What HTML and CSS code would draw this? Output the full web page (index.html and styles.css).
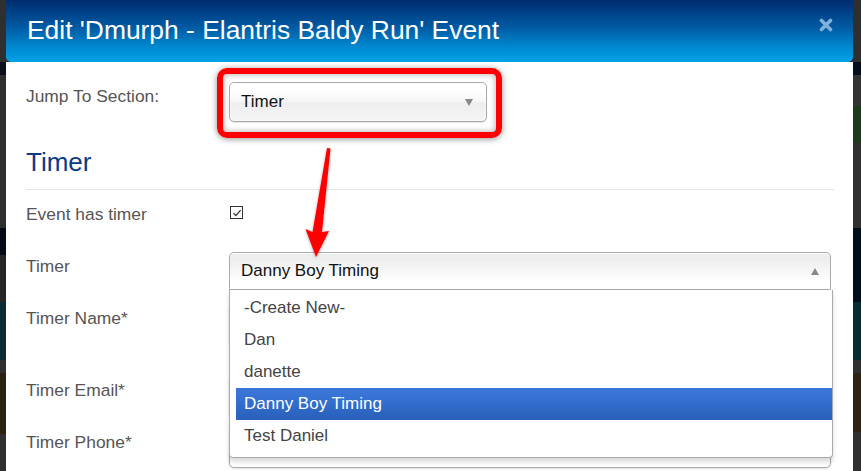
FILE: index.html
```html
<!DOCTYPE html>
<html>
<head>
<meta charset="utf-8">
<link rel="stylesheet" href="styles.css">
</head>
<body>
<div class="strip strip-left"></div>
<div class="modal">
  <div class="modal-header">
    <h1 class="modal-title">Edit 'Dmurph - Elantris Baldy Run' Event</h1>
    <svg class="close" width="14" height="14" viewBox="0 0 14 14"><path d="M2.5 2.5 L11.5 11.5 M11.5 2.5 L2.5 11.5" stroke="#7fb1da" stroke-width="3.6" stroke-linecap="round"/></svg>
  </div>
  <div class="modal-body">
    <div class="row row-jump">
      <label class="label">Jump To Section:</label>
      <div class="field">
        <div class="select select-jump">
          <span class="select-text">Timer</span>
          <span class="caret-down"></span>
        </div>
        <div class="highlight-box"></div>
      </div>
    </div>
    <h2 class="section-title">Timer</h2>
    <div class="divider"></div>
    <div class="row row-check">
      <label class="label">Event has timer</label>
      <div class="field">
        <span class="checkbox"><svg width="10" height="10" viewBox="0 0 10 10"><path d="M1.5 5.2 L4 7.6 L8.6 2.2" fill="none" stroke="#333" stroke-width="1.3"/></svg></span>
      </div>
    </div>
    <div class="row row-timer">
      <label class="label">Timer</label>
      <div class="field">
        <div class="select select-open">
          <span class="select-text">Danny Boy Timing</span>
          <span class="caret-up"></span>
        </div>
        <div class="dropdown">
          <ul class="results">
            <li class="item">-Create New-</li>
            <li class="item">Dan</li>
            <li class="item">danette</li>
            <li class="item item-active">Danny Boy Timing</li>
            <li class="item">Test Daniel</li>
          </ul>
        </div>
      </div>
    </div>
    <div class="row row-input row-name">
      <label class="label">Timer Name*</label>
      <div class="field"><div class="input"></div></div>
    </div>
    <div class="row row-input row-email">
      <label class="label">Timer Email*</label>
      <div class="field"><div class="input"></div></div>
    </div>
    <div class="row row-input row-phone">
      <label class="label">Timer Phone*</label>
      <div class="field"><div class="input"></div></div>
    </div>
  </div>
</div>
<div class="strip strip-right"></div>
<svg class="annotation-arrow" width="861" height="471" viewBox="0 0 861 471">
  <defs>
    <filter id="sh" x="-20%" y="-20%" width="140%" height="140%">
      <feDropShadow dx="0" dy="1" stdDeviation="1.5" flood-color="#000" flood-opacity="0.35"/>
    </filter>
  </defs>
  <polygon filter="url(#sh)" fill="#ff0000" points="327,148 330.5,148.5 322,232 329,231 316,257 305.5,229 312.5,232"/>
</svg>
</body>
</html>
```
FILE: styles.css
```css
* { box-sizing: border-box; }
html, body { margin: 0; padding: 0; }
body {
  width: 861px;
  height: 471px;
  overflow: hidden;
  display: flex;
  background: #2f2f2f;
  font-family: "Liberation Sans", Arial, sans-serif;
  position: relative;
}
.strip { height: 471px; }
.strip-left {
  width: 6px;
  flex: 0 0 6px;
  background: linear-gradient(to bottom,
    #2f2f2f 0, #2f2f2f 62px, #0c0f18 62px, #0c0f18 75px,
    #2f2f2f 75px, #2f2f2f 228px, #050b14 228px, #050b14 255px,
    #262626 255px, #262626 302px, #0a2b36 302px, #0a2b36 360px,
    #2f2f2f 360px, #2f2f2f 373px, #2b2110 373px, #2b2110 434px,
    #2f2f2f 434px);
}
.strip-right {
  flex: 1;
  background: linear-gradient(to bottom,
    #2f2f2f 0, #2f2f2f 62px, #050c1c 62px, #050c1c 75px,
    #333 75px, #333 106px, #1e3a1c 106px, #1e3a1c 143px,
    #303030 143px, #303030 228px, #020d1a 228px, #020d1a 302px,
    #082a33 302px, #082a33 360px, #2f2f2f 360px, #2f2f2f 373px,
    #2e2210 373px, #2e2210 432px, #2f2f2f 432px);
}
.modal {
  width: 847px;
  flex: 0 0 847px;
  display: flex;
  flex-direction: column;
}
.modal-header {
  height: 62px;
  flex: 0 0 62px;
  display: flex;
  justify-content: space-between;
  align-items: flex-start;
  padding: 0 20px 0 21px;
  border-radius: 0 0 5px 5px;
  background: linear-gradient(to bottom, #002c70 0%, #015ca4 45%, #0087ce 75%, #00a3e6 100%);
}
.modal-title {
  margin: 0;
  font-size: 26.4px;
  line-height: 60px;
  font-weight: normal;
  color: #fff;
}
.close { margin-top: 18px; }
.modal-body {
  flex: 1;
  background: #fff;
  padding: 20px 19px 0 20px;
}
.row {
  display: grid;
  grid-template-columns: 203px 602px;
}
.label {
  font-size: 17.4px;
  line-height: 24px;
  color: #555;
  padding-top: 2px;
}
.field { position: relative; }
.row-jump { height: 40px; }
.select {
  height: 40px;
  border: 1px solid #aaa;
  border-radius: 5px;
  background: linear-gradient(to bottom, #fff 20%, #f6f6f6 50%, #eee 52%, #f4f4f4 100%);
  box-shadow: inset 0 0 3px #fff, 0 1px 1px rgba(0,0,0,0.1);
  display: flex;
  align-items: center;
  justify-content: space-between;
  padding: 0 11px 0 11px;
}
.select-jump { width: 258px; }
.select-text { font-size: 17px; color: #111; }
.caret-down {
  width: 0; height: 0;
  border-left: 4.5px solid transparent;
  border-right: 4.5px solid transparent;
  border-top: 7px solid #888;
  margin-right: 2px;
}
.caret-up {
  width: 0; height: 0;
  border-left: 4.5px solid transparent;
  border-right: 4.5px solid transparent;
  border-bottom: 7px solid #888;
  margin-right: 0;
}
.highlight-box {
  position: absolute;
  left: -12px;
  top: -14px;
  width: 285px;
  height: 70px;
  border: 6px solid #ff0000;
  border-radius: 10px;
  box-shadow: 0 1px 6px rgba(0,0,0,0.45), inset 0 0 6px rgba(0,0,0,0.35);
}
.section-title {
  margin: 25px 0 0;
  font-size: 26px;
  line-height: 30px;
  font-weight: normal;
  color: #0b3a87;
}
.divider {
  margin-top: 12px;
  border-top: 1px solid #e5e5e5;
  height: 1px;
}
.row-check { margin-top: 10px; height: 24px; }
.checkbox {
  display: flex;
  align-items: center;
  justify-content: center;
  width: 13px;
  height: 13px;
  margin: 6px 0 0 1px;
  border: 1px solid #333;
  background: #fff;
}
.row-timer { margin-top: 28px; }
.select-open {
  height: 38px;
  border-radius: 5px 5px 0 0;
  background: linear-gradient(to bottom, #eee 20%, #fff 80%);
  box-shadow: inset 0 1px 0 #fff;
}
.dropdown {
  position: absolute;
  z-index: 5;
  left: 0;
  top: 38px;
  width: 604px;
  background: #fff;
  border: 1px solid #aaa;
  border-top: 0;
  border-radius: 0 0 4px 4px;
  box-shadow: 0 4px 5px rgba(0,0,0,0.15);
  padding: 2px 0 5px 6px;
}
.results { list-style: none; margin: 0; padding: 0; }
.item {
  height: 32px;
  line-height: 32px;
  padding-left: 8px;
  font-size: 17px;
  color: #444;
}
.item-active {
  color: #fff;
  background: linear-gradient(to bottom, #3875d7 20%, #2a62bc 90%);
}
.row-input { height: 40px; }
.row-name { margin-top: 14px; }
.row-email { margin-top: 32px; }
.row-phone { margin-top: 12px; }
.input {
  height: 40px;
  border: 1px solid #aaa;
  border-radius: 5px;
  background: #fff;
  box-shadow: 0 1px 2px rgba(0,0,0,0.12);
}
.annotation-arrow {
  position: absolute;
  left: 0;
  top: 0;
  pointer-events: none;
  z-index: 10;
}
```
